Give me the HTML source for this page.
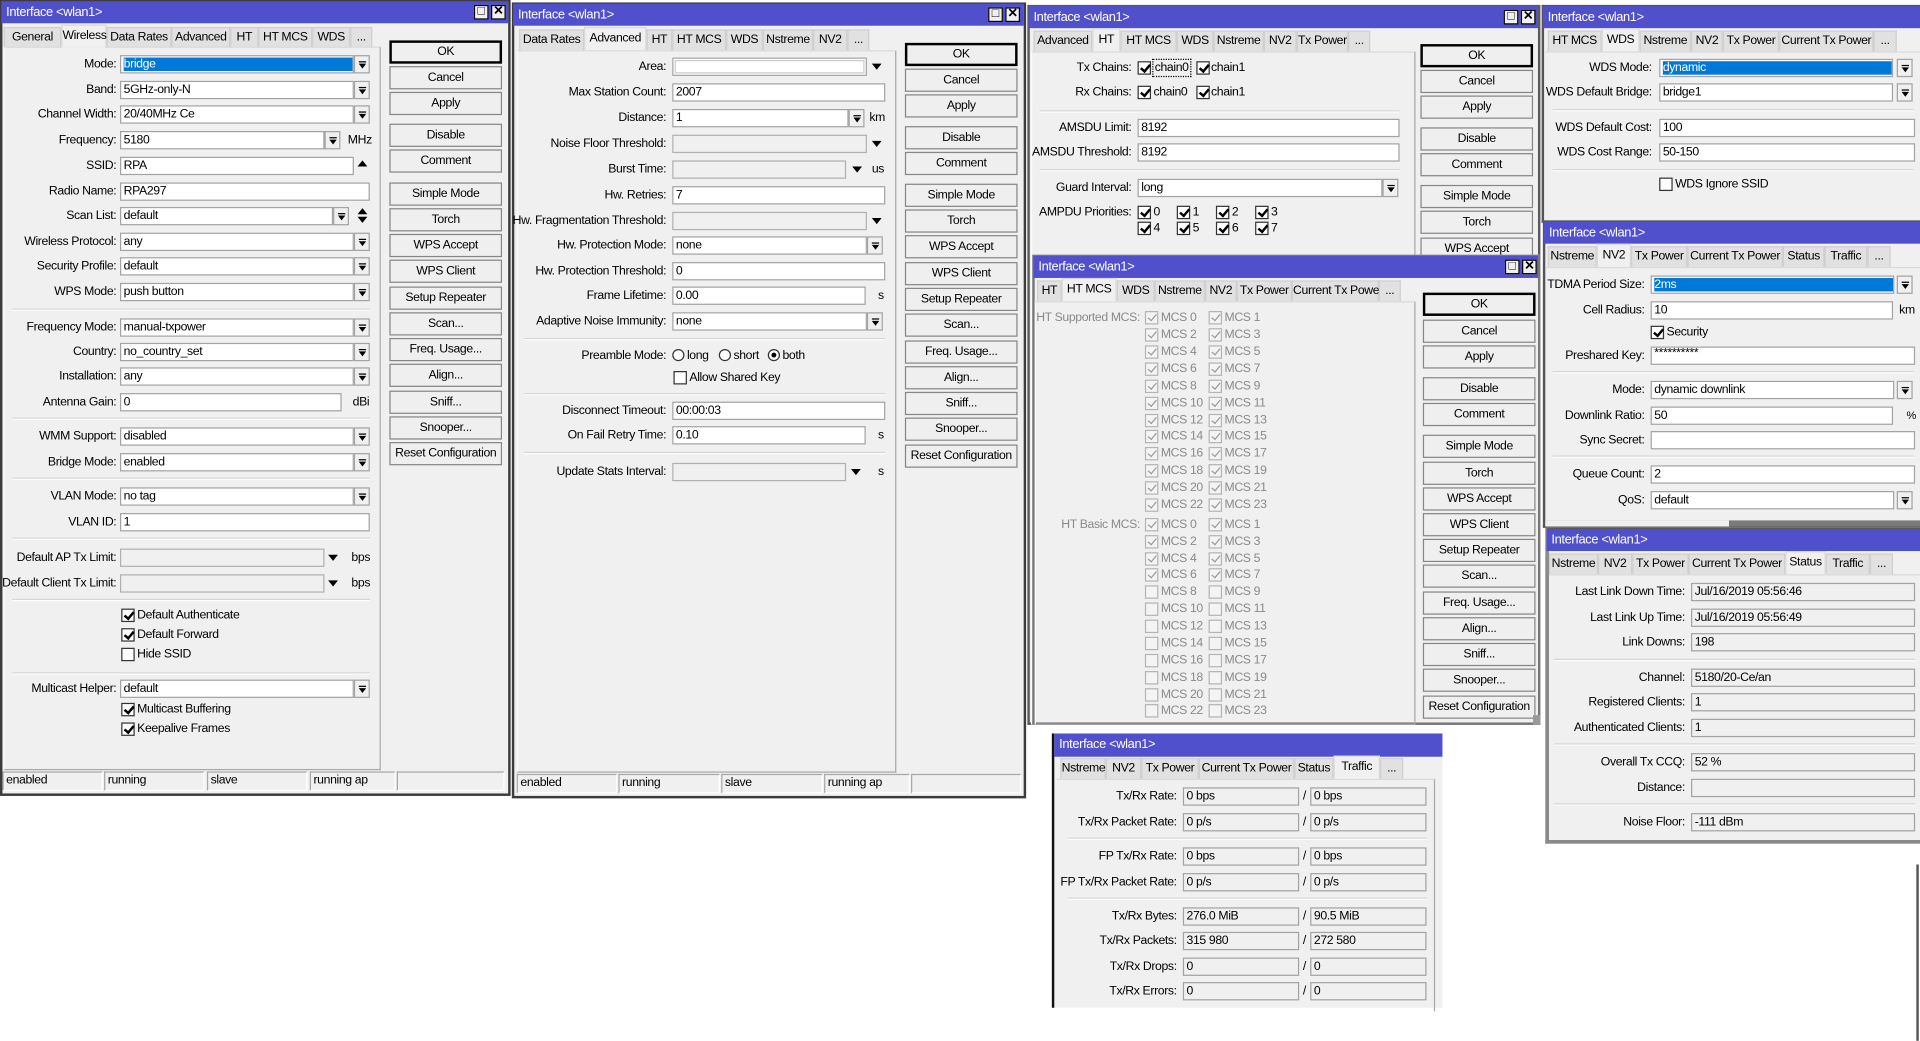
<!DOCTYPE html>
<html><head><meta charset="utf-8"><style>
html,body{margin:0;padding:0;background:#fff;width:1920px;height:1040px;overflow:hidden}
#s{position:absolute;left:0;top:0;width:1568px;height:850px;transform:scale(1.22449);transform-origin:0 0;font:10px "Liberation Sans",sans-serif;letter-spacing:-0.3px;color:#000}
#s div{position:absolute;white-space:nowrap;box-sizing:border-box}
.w{background:#f0f0f0;border:1px solid #646464}
.t{background:#5050cc;color:#fff;height:18px;line-height:18px;padding-left:4px;font-size:10.5px}
.x{width:12px;height:12px;border:1px solid #000;background:#f0f0f0;font-size:10px;line-height:10px;text-align:center;font-weight:bold;color:#000;letter-spacing:0}
.tb{height:17px;background:#e1e1e1;border:1px solid #cfcfcf;border-bottom:none;text-align:center;line-height:16px}
.ta{background:#f0f0f0;height:19px;line-height:17px;border:1px solid #d8d8d8;border-bottom:none;z-index:2}
.p{border-right:1px solid #a8a8a8;border-bottom:1px solid #a8a8a8;border-top:1px solid #dadada;border-left:1px solid #fafafa}
.l{text-align:right;height:15px;line-height:15px}
.f{background:#fff;border:1px solid #a3a3a3;height:15px;line-height:13px;padding-left:2px;overflow:hidden}
.fd{background:#f0f0f0;border-color:#b0b0b0}
.fs span{background:#0078d7;color:#fff;display:block;height:11px;line-height:11px;margin-top:1px}
.d{width:13px;height:15px;border:1px solid #a3a3a3;background:#f0f0f0}
.d:before{content:"";position:absolute;left:3px;top:6px;border-left:3px solid transparent;border-right:3px solid transparent;border-top:4px solid #000}
.d:after{content:"";position:absolute;left:3px;top:4px;width:6px;height:1px;background:#000}
.v{width:0;height:0;border-left:4px solid transparent;border-right:4px solid transparent;border-top:5px solid #000}
.b{width:92px;height:19px;border:1px solid #868686;background:#efefef;text-align:center;line-height:17px}
.ok{border:2px solid #000;line-height:15px}
.c{width:11px;height:11px;border:1px solid #333;background:#fff}
.k:after{content:"";position:absolute;left:3px;top:0px;width:3px;height:6px;border:solid #000;border-width:0 2px 2px 0;transform:rotate(40deg)}
.g{border-color:#b4b4b4;background:#f4f4f4}
.g.k:after{border-color:#9a9a9a;border-width:0 1px 1px 0}
.gt{color:#8a8a8a}
.sp{height:2px;border-top:1px solid #d6d6d6;border-bottom:1px solid #fcfcfc}
.sb{height:16px;border:1px solid #a8a8a8;border-right-color:#fff;border-bottom-color:#fff;line-height:14px;padding-left:2px}
.r{width:10px;height:10px;border:1px solid #333;border-radius:50%;background:#fff}
.rk:after{content:"";position:absolute;left:2px;top:2px;width:4px;height:4px;border-radius:50%;background:#000}
.ro{background:#f0f0f0;border:1px solid #a3a3a3;height:15px;line-height:13px;padding-left:2px}
</style></head><body><div id="s">

<!-- W1 -->
<div class="w" style="left:0;top:0;width:417px;height:650px;border:2px solid #3c3c3c"></div>
<div class="t" style="left:1px;top:1px;width:414px">Interface &lt;wlan1&gt;</div>
<div class="x" style="left:387px;top:4px">□</div><div class="x" style="left:401px;top:4px">✕</div>
<div class="tb" style="left:3px;top:22px;width:47px">General</div>
<div class="tb ta" style="left:50px;top:20px;width:37px">Wireless</div>
<div class="tb" style="left:87px;top:22px;width:53px">Data Rates</div>
<div class="tb" style="left:140px;top:22px;width:48px">Advanced</div>
<div class="tb" style="left:188px;top:22px;width:23px">HT</div>
<div class="tb" style="left:211px;top:22px;width:44px">HT MCS</div>
<div class="tb" style="left:255px;top:22px;width:31px">WDS</div>
<div class="tb" style="left:286px;top:22px;width:18px">...</div>
<div class="p" style="left:3px;top:38px;width:308px;height:591px"></div>

<div class="l" style="left:0;top:45px;width:95px">Mode:</div><div class="f fs" style="left:98px;top:45px;width:191px"><span>bridge</span></div><div class="d" style="left:289px;top:45px"></div>
<div class="l" style="left:0;top:66px;width:95px">Band:</div><div class="f" style="left:98px;top:66px;width:191px">5GHz-only-N</div><div class="d" style="left:289px;top:66px"></div>
<div class="l" style="left:0;top:86px;width:95px">Channel Width:</div><div class="f" style="left:98px;top:86px;width:191px">20/40MHz Ce</div><div class="d" style="left:289px;top:86px"></div>
<div class="l" style="left:0;top:107px;width:95px">Frequency:</div><div class="f" style="left:98px;top:107px;width:167px">5180</div><div class="d" style="left:265px;top:107px"></div><div style="left:284px;top:107px;line-height:15px">MHz</div>
<div class="l" style="left:0;top:128px;width:95px">SSID:</div><div class="f" style="left:98px;top:128px;width:191px">RPA</div><div style="left:292px;top:131px;border-left:4px solid transparent;border-right:4px solid transparent;border-bottom:5px solid #000"></div>
<div class="l" style="left:0;top:149px;width:95px">Radio Name:</div><div class="f" style="left:98px;top:149px;width:204px">RPA297</div>
<div class="l" style="left:0;top:169px;width:95px">Scan List:</div><div class="f" style="left:98px;top:169px;width:174px">default</div><div class="d" style="left:272px;top:169px"></div><div style="left:292px;top:170px;border-left:4px solid transparent;border-right:4px solid transparent;border-bottom:5px solid #000"></div><div style="left:292px;top:177px;border-left:4px solid transparent;border-right:4px solid transparent;border-top:5px solid #000"></div>
<div class="l" style="left:0;top:190px;width:95px">Wireless Protocol:</div><div class="f" style="left:98px;top:190px;width:191px">any</div><div class="d" style="left:289px;top:190px"></div>
<div class="l" style="left:0;top:210px;width:95px">Security Profile:</div><div class="f" style="left:98px;top:210px;width:191px">default</div><div class="d" style="left:289px;top:210px"></div>
<div class="l" style="left:0;top:231px;width:95px">WPS Mode:</div><div class="f" style="left:98px;top:231px;width:191px">push button</div><div class="d" style="left:289px;top:231px"></div>
<div class="sp" style="left:10px;top:252px;width:292px"></div>
<div class="l" style="left:0;top:260px;width:95px">Frequency Mode:</div><div class="f" style="left:98px;top:260px;width:191px">manual-txpower</div><div class="d" style="left:289px;top:260px"></div>
<div class="l" style="left:0;top:280px;width:95px">Country:</div><div class="f" style="left:98px;top:280px;width:191px">no_country_set</div><div class="d" style="left:289px;top:280px"></div>
<div class="l" style="left:0;top:300px;width:95px">Installation:</div><div class="f" style="left:98px;top:300px;width:191px">any</div><div class="d" style="left:289px;top:300px"></div>
<div class="l" style="left:0;top:321px;width:95px">Antenna Gain:</div><div class="f" style="left:98px;top:321px;width:181px">0</div><div style="left:288px;top:321px;line-height:15px">dBi</div>
<div class="sp" style="left:10px;top:341px;width:292px"></div>
<div class="l" style="left:0;top:349px;width:95px">WMM Support:</div><div class="f" style="left:98px;top:349px;width:191px">disabled</div><div class="d" style="left:289px;top:349px"></div>
<div class="l" style="left:0;top:370px;width:95px">Bridge Mode:</div><div class="f" style="left:98px;top:370px;width:191px">enabled</div><div class="d" style="left:289px;top:370px"></div>
<div class="sp" style="left:10px;top:390px;width:292px"></div>
<div class="l" style="left:0;top:398px;width:95px">VLAN Mode:</div><div class="f" style="left:98px;top:398px;width:191px">no tag</div><div class="d" style="left:289px;top:398px"></div>
<div class="l" style="left:0;top:419px;width:95px">VLAN ID:</div><div class="f" style="left:98px;top:419px;width:204px">1</div>
<div class="sp" style="left:10px;top:439px;width:292px"></div>
<div class="l" style="left:0;top:448px;width:95px">Default AP Tx Limit:</div><div class="f fd" style="left:98px;top:448px;width:167px"></div><div class="v" style="left:268px;top:453px"></div><div style="left:287px;top:448px;line-height:15px">bps</div>
<div class="l" style="left:0;top:469px;width:95px">Default Client Tx Limit:</div><div class="f fd" style="left:98px;top:469px;width:167px"></div><div class="v" style="left:268px;top:474px"></div><div style="left:287px;top:469px;line-height:15px">bps</div>
<div class="sp" style="left:10px;top:489px;width:292px"></div>
<div class="c k" style="left:99px;top:497px"></div><div style="left:112px;top:495px;line-height:15px">Default Authenticate</div>
<div class="c k" style="left:99px;top:513px"></div><div style="left:112px;top:511px;line-height:15px">Default Forward</div>
<div class="c" style="left:99px;top:529px"></div><div style="left:112px;top:527px;line-height:15px">Hide SSID</div>
<div class="sp" style="left:10px;top:549px;width:292px"></div>
<div class="l" style="left:0;top:555px;width:95px">Multicast Helper:</div><div class="f" style="left:98px;top:555px;width:191px">default</div><div class="d" style="left:289px;top:555px"></div>
<div class="c k" style="left:99px;top:574px"></div><div style="left:112px;top:572px;line-height:15px">Multicast Buffering</div>
<div class="c k" style="left:99px;top:590px"></div><div style="left:112px;top:588px;line-height:15px">Keepalive Frames</div>

<div class="b ok" style="left:318px;top:33px">OK</div>
<div class="b" style="left:318px;top:54px">Cancel</div>
<div class="b" style="left:318px;top:75px">Apply</div>
<div class="b" style="left:318px;top:101px">Disable</div>
<div class="b" style="left:318px;top:122px">Comment</div>
<div class="b" style="left:318px;top:149px">Simple Mode</div>
<div class="b" style="left:318px;top:170px">Torch</div>
<div class="b" style="left:318px;top:191px">WPS Accept</div>
<div class="b" style="left:318px;top:212px">WPS Client</div>
<div class="b" style="left:318px;top:234px">Setup Repeater</div>
<div class="b" style="left:318px;top:255px">Scan...</div>
<div class="b" style="left:318px;top:276px">Freq. Usage...</div>
<div class="b" style="left:318px;top:297px">Align...</div>
<div class="b" style="left:318px;top:319px">Sniff...</div>
<div class="b" style="left:318px;top:340px">Snooper...</div>
<div class="b" style="left:318px;top:361px">Reset Configuration</div>
<div class="sb" style="left:2px;top:630px;width:82px">enabled</div>
<div class="sb" style="left:85px;top:630px;width:82px">running</div>
<div class="sb" style="left:169px;top:630px;width:82px">slave</div>
<div class="sb" style="left:253px;top:630px;width:70px">running ap</div>
<div class="sb" style="left:324px;top:630px;width:88px"></div>

<!-- W2 -->
<div class="w" style="left:418px;top:2px;width:420px;height:650px;border:2px solid #3c3c3c"></div>
<div class="t" style="left:419px;top:3px;width:417px">Interface &lt;wlan1&gt;</div>
<div class="x" style="left:807px;top:6px">□</div><div class="x" style="left:821px;top:6px">✕</div>
<div class="tb" style="left:424px;top:24px;width:53px">Data Rates</div>
<div class="tb ta" style="left:477px;top:22px;width:51px">Advanced</div>
<div class="tb" style="left:528px;top:24px;width:21px">HT</div>
<div class="tb" style="left:549px;top:24px;width:44px">HT MCS</div>
<div class="tb" style="left:593px;top:24px;width:30px">WDS</div>
<div class="tb" style="left:623px;top:24px;width:41px">Nstreme</div>
<div class="tb" style="left:664px;top:24px;width:28px">NV2</div>
<div class="tb" style="left:692px;top:24px;width:18px">...</div>
<div class="p" style="left:422px;top:41px;width:310px;height:590px"></div>
<div class="l" style="left:380px;top:47px;width:164px">Area:</div><div class="f" style="left:549px;top:47px;width:159px;box-shadow:inset 0 0 0 1px #fff,inset 0 0 0 2px #ccc"></div><div class="v" style="left:712px;top:52px"></div>
<div class="l" style="left:380px;top:68px;width:164px">Max Station Count:</div><div class="f" style="left:549px;top:68px;width:174px">2007</div>
<div class="l" style="left:380px;top:89px;width:164px">Distance:</div><div class="f" style="left:549px;top:89px;width:144px">1</div><div class="d" style="left:693px;top:89px"></div><div style="left:710px;top:89px;line-height:15px">km</div>
<div class="l" style="left:380px;top:110px;width:164px">Noise Floor Threshold:</div><div class="f fd" style="left:549px;top:110px;width:159px"></div><div class="v" style="left:712px;top:115px"></div>
<div class="l" style="left:380px;top:131px;width:164px">Burst Time:</div><div class="f fd" style="left:549px;top:131px;width:142px"></div><div class="v" style="left:696px;top:136px"></div><div style="left:712px;top:131px;line-height:15px">us</div>
<div class="l" style="left:380px;top:152px;width:164px">Hw. Retries:</div><div class="f" style="left:549px;top:152px;width:174px">7</div>
<div class="l" style="left:380px;top:173px;width:164px">Hw. Fragmentation Threshold:</div><div class="f fd" style="left:549px;top:173px;width:159px"></div><div class="v" style="left:712px;top:178px"></div>
<div class="l" style="left:380px;top:193px;width:164px">Hw. Protection Mode:</div><div class="f" style="left:549px;top:193px;width:159px">none</div><div class="d" style="left:708px;top:193px"></div>
<div class="l" style="left:380px;top:214px;width:164px">Hw. Protection Threshold:</div><div class="f" style="left:549px;top:214px;width:174px">0</div>
<div class="l" style="left:380px;top:234px;width:164px">Frame Lifetime:</div><div class="f" style="left:549px;top:234px;width:158px">0.00</div><div style="left:717px;top:234px;line-height:15px">s</div>
<div class="l" style="left:380px;top:255px;width:164px">Adaptive Noise Immunity:</div><div class="f" style="left:549px;top:255px;width:159px">none</div><div class="d" style="left:708px;top:255px"></div>
<div class="sp" style="left:428px;top:276px;width:295px"></div>
<div class="l" style="left:380px;top:283px;width:164px">Preamble Mode:</div>
<div class="r" style="left:549px;top:285px"></div><div style="left:561px;top:283px;line-height:15px">long</div>
<div class="r" style="left:587px;top:285px"></div><div style="left:599px;top:283px;line-height:15px">short</div>
<div class="r rk" style="left:627px;top:285px"></div><div style="left:639px;top:283px;line-height:15px">both</div>
<div class="c" style="left:550px;top:303px"></div><div style="left:563px;top:301px;line-height:15px">Allow Shared Key</div>
<div class="sp" style="left:428px;top:321px;width:295px"></div>
<div class="l" style="left:380px;top:328px;width:164px">Disconnect Timeout:</div><div class="f" style="left:549px;top:328px;width:174px">00:00:03</div>
<div class="l" style="left:380px;top:348px;width:164px">On Fail Retry Time:</div><div class="f" style="left:549px;top:348px;width:158px">0.10</div><div style="left:717px;top:348px;line-height:15px">s</div>
<div class="sp" style="left:428px;top:369px;width:295px"></div>
<div class="l" style="left:380px;top:378px;width:164px">Update Stats Interval:</div><div class="f fd" style="left:549px;top:378px;width:142px"></div><div class="v" style="left:695px;top:383px"></div><div style="left:717px;top:378px;line-height:15px">s</div>
<div class="b ok" style="left:739px;top:35px">OK</div>
<div class="b" style="left:739px;top:56px">Cancel</div>
<div class="b" style="left:739px;top:77px">Apply</div>
<div class="b" style="left:739px;top:103px">Disable</div>
<div class="b" style="left:739px;top:124px">Comment</div>
<div class="b" style="left:739px;top:150px">Simple Mode</div>
<div class="b" style="left:739px;top:171px">Torch</div>
<div class="b" style="left:739px;top:192px">WPS Accept</div>
<div class="b" style="left:739px;top:214px">WPS Client</div>
<div class="b" style="left:739px;top:235px">Setup Repeater</div>
<div class="b" style="left:739px;top:256px">Scan...</div>
<div class="b" style="left:739px;top:278px">Freq. Usage...</div>
<div class="b" style="left:739px;top:299px">Align...</div>
<div class="b" style="left:739px;top:320px">Sniff...</div>
<div class="b" style="left:739px;top:341px">Snooper...</div>
<div class="b" style="left:739px;top:363px">Reset Configuration</div>
<div class="sb" style="left:422px;top:632px;width:82px">enabled</div>
<div class="sb" style="left:505px;top:632px;width:83px">running</div>
<div class="sb" style="left:589px;top:632px;width:83px">slave</div>
<div class="sb" style="left:673px;top:632px;width:70px">running ap</div>
<div class="sb" style="left:744px;top:632px;width:90px"></div>

<!-- W3 -->
<div class="w" style="left:839px;top:4px;width:419px;height:588px;border:2px solid #5a5a5a"></div>
<div class="t" style="left:840px;top:5px;width:416px">Interface &lt;wlan1&gt;</div>
<div class="x" style="left:1228px;top:8px">□</div><div class="x" style="left:1242px;top:8px">✕</div>
<div class="tb" style="left:844px;top:25px;width:48px">Advanced</div>
<div class="tb ta" style="left:892px;top:23px;width:23px">HT</div>
<div class="tb" style="left:915px;top:25px;width:46px">HT MCS</div>
<div class="tb" style="left:961px;top:25px;width:30px">WDS</div>
<div class="tb" style="left:991px;top:25px;width:41px">Nstreme</div>
<div class="tb" style="left:1032px;top:25px;width:27px">NV2</div>
<div class="tb" style="left:1059px;top:25px;width:42px">Tx Power</div>
<div class="tb" style="left:1101px;top:25px;width:18px">...</div>
<div class="p" style="left:842px;top:42px;width:314px;height:550px"></div>
<div class="l" style="left:800px;top:48px;width:124px">Tx Chains:</div>
<div class="c k" style="left:929px;top:50px"></div><div style="left:941px;top:48px;line-height:13px;border:1px dotted #000;padding:0 1px">chain0</div>
<div class="c k" style="left:977px;top:50px"></div><div style="left:989px;top:48px;line-height:15px">chain1</div>
<div class="l" style="left:800px;top:68px;width:124px">Rx Chains:</div>
<div class="c k" style="left:929px;top:70px"></div><div style="left:942px;top:68px;line-height:15px">chain0</div>
<div class="c k" style="left:977px;top:70px"></div><div style="left:989px;top:68px;line-height:15px">chain1</div>
<div class="sp" style="left:849px;top:90px;width:294px"></div>
<div class="l" style="left:800px;top:97px;width:124px">AMSDU Limit:</div><div class="f" style="left:929px;top:97px;width:214px">8192</div>
<div class="l" style="left:800px;top:117px;width:124px">AMSDU Threshold:</div><div class="f" style="left:929px;top:117px;width:214px">8192</div>
<div class="sp" style="left:849px;top:138px;width:294px"></div>
<div class="l" style="left:800px;top:146px;width:124px">Guard Interval:</div><div class="f" style="left:929px;top:146px;width:200px">long</div><div class="d" style="left:1129px;top:146px"></div>
<div class="l" style="left:800px;top:166px;width:124px">AMPDU Priorities:</div>
<div class="c k" style="left:929px;top:168px"></div><div style="left:942px;top:166px;line-height:15px">0</div>
<div class="c k" style="left:961px;top:168px"></div><div style="left:974px;top:166px;line-height:15px">1</div>
<div class="c k" style="left:993px;top:168px"></div><div style="left:1006px;top:166px;line-height:15px">2</div>
<div class="c k" style="left:1025px;top:168px"></div><div style="left:1038px;top:166px;line-height:15px">3</div>
<div class="c k" style="left:929px;top:181px"></div><div style="left:942px;top:179px;line-height:15px">4</div>
<div class="c k" style="left:961px;top:181px"></div><div style="left:974px;top:179px;line-height:15px">5</div>
<div class="c k" style="left:993px;top:181px"></div><div style="left:1006px;top:179px;line-height:15px">6</div>
<div class="c k" style="left:1025px;top:181px"></div><div style="left:1038px;top:179px;line-height:15px">7</div>
<div class="b ok" style="left:1160px;top:36px">OK</div>
<div class="b" style="left:1160px;top:57px">Cancel</div>
<div class="b" style="left:1160px;top:78px">Apply</div>
<div class="b" style="left:1160px;top:104px">Disable</div>
<div class="b" style="left:1160px;top:125px">Comment</div>
<div class="b" style="left:1160px;top:151px">Simple Mode</div>
<div class="b" style="left:1160px;top:172px">Torch</div>
<div class="b" style="left:1160px;top:194px">WPS Accept</div>

<!-- W4 -->
<div class="w" style="left:843px;top:208px;width:415px;height:384px;border:2px solid #777"></div>
<div class="t" style="left:844px;top:209px;width:412px;height:18px">Interface &lt;wlan1&gt;</div>
<div class="x" style="left:1229px;top:212px">□</div><div class="x" style="left:1243px;top:212px">✕</div>
<div class="tb" style="left:847px;top:229px;width:20px">HT</div>
<div class="tb ta" style="left:867px;top:227px;width:45px">HT MCS</div>
<div class="tb" style="left:912px;top:229px;width:31px">WDS</div>
<div class="tb" style="left:943px;top:229px;width:41px">Nstreme</div>
<div class="tb" style="left:984px;top:229px;width:26px">NV2</div>
<div class="tb" style="left:1010px;top:229px;width:45px">Tx Power</div>
<div class="tb" style="left:1055px;top:229px;width:71px">Current Tx Power</div>
<div class="tb" style="left:1126px;top:229px;width:18px">...</div>
<div class="p" style="left:845px;top:246px;width:311px;height:346px"></div>
<div class="l gt" style="left:830px;top:252px;width:101px">HT Supported MCS:</div>
<div class="l gt" style="left:830px;top:421px;width:101px">HT Basic MCS:</div>

<div class="c g k" style="left:935px;top:254px"></div><div class="gt" style="left:948px;top:252px;line-height:15px">MCS 0</div><div class="c g k" style="left:987px;top:254px"></div><div class="gt" style="left:1000px;top:252px;line-height:15px">MCS 1</div>
<div class="c g k" style="left:935px;top:268px"></div><div class="gt" style="left:948px;top:266px;line-height:15px">MCS 2</div><div class="c g k" style="left:987px;top:268px"></div><div class="gt" style="left:1000px;top:266px;line-height:15px">MCS 3</div>
<div class="c g k" style="left:935px;top:282px"></div><div class="gt" style="left:948px;top:280px;line-height:15px">MCS 4</div><div class="c g k" style="left:987px;top:282px"></div><div class="gt" style="left:1000px;top:280px;line-height:15px">MCS 5</div>
<div class="c g k" style="left:935px;top:296px"></div><div class="gt" style="left:948px;top:294px;line-height:15px">MCS 6</div><div class="c g k" style="left:987px;top:296px"></div><div class="gt" style="left:1000px;top:294px;line-height:15px">MCS 7</div>
<div class="c g k" style="left:935px;top:310px"></div><div class="gt" style="left:948px;top:308px;line-height:15px">MCS 8</div><div class="c g k" style="left:987px;top:310px"></div><div class="gt" style="left:1000px;top:308px;line-height:15px">MCS 9</div>
<div class="c g k" style="left:935px;top:324px"></div><div class="gt" style="left:948px;top:322px;line-height:15px">MCS 10</div><div class="c g k" style="left:987px;top:324px"></div><div class="gt" style="left:1000px;top:322px;line-height:15px">MCS 11</div>
<div class="c g k" style="left:935px;top:338px"></div><div class="gt" style="left:948px;top:336px;line-height:15px">MCS 12</div><div class="c g k" style="left:987px;top:338px"></div><div class="gt" style="left:1000px;top:336px;line-height:15px">MCS 13</div>
<div class="c g k" style="left:935px;top:351px"></div><div class="gt" style="left:948px;top:349px;line-height:15px">MCS 14</div><div class="c g k" style="left:987px;top:351px"></div><div class="gt" style="left:1000px;top:349px;line-height:15px">MCS 15</div>
<div class="c g k" style="left:935px;top:365px"></div><div class="gt" style="left:948px;top:363px;line-height:15px">MCS 16</div><div class="c g k" style="left:987px;top:365px"></div><div class="gt" style="left:1000px;top:363px;line-height:15px">MCS 17</div>
<div class="c g k" style="left:935px;top:379px"></div><div class="gt" style="left:948px;top:377px;line-height:15px">MCS 18</div><div class="c g k" style="left:987px;top:379px"></div><div class="gt" style="left:1000px;top:377px;line-height:15px">MCS 19</div>
<div class="c g k" style="left:935px;top:393px"></div><div class="gt" style="left:948px;top:391px;line-height:15px">MCS 20</div><div class="c g k" style="left:987px;top:393px"></div><div class="gt" style="left:1000px;top:391px;line-height:15px">MCS 21</div>
<div class="c g k" style="left:935px;top:407px"></div><div class="gt" style="left:948px;top:405px;line-height:15px">MCS 22</div><div class="c g k" style="left:987px;top:407px"></div><div class="gt" style="left:1000px;top:405px;line-height:15px">MCS 23</div>

<div class="c g k" style="left:935px;top:423px"></div><div class="gt" style="left:948px;top:421px;line-height:15px">MCS 0</div><div class="c g k" style="left:987px;top:423px"></div><div class="gt" style="left:1000px;top:421px;line-height:15px">MCS 1</div>
<div class="c g k" style="left:935px;top:437px"></div><div class="gt" style="left:948px;top:435px;line-height:15px">MCS 2</div><div class="c g k" style="left:987px;top:437px"></div><div class="gt" style="left:1000px;top:435px;line-height:15px">MCS 3</div>
<div class="c g k" style="left:935px;top:451px"></div><div class="gt" style="left:948px;top:449px;line-height:15px">MCS 4</div><div class="c g k" style="left:987px;top:451px"></div><div class="gt" style="left:1000px;top:449px;line-height:15px">MCS 5</div>
<div class="c g k" style="left:935px;top:464px"></div><div class="gt" style="left:948px;top:462px;line-height:15px">MCS 6</div><div class="c g k" style="left:987px;top:464px"></div><div class="gt" style="left:1000px;top:462px;line-height:15px">MCS 7</div>
<div class="c g" style="left:935px;top:478px"></div><div class="gt" style="left:948px;top:476px;line-height:15px">MCS 8</div><div class="c g" style="left:987px;top:478px"></div><div class="gt" style="left:1000px;top:476px;line-height:15px">MCS 9</div>
<div class="c g" style="left:935px;top:492px"></div><div class="gt" style="left:948px;top:490px;line-height:15px">MCS 10</div><div class="c g" style="left:987px;top:492px"></div><div class="gt" style="left:1000px;top:490px;line-height:15px">MCS 11</div>
<div class="c g" style="left:935px;top:506px"></div><div class="gt" style="left:948px;top:504px;line-height:15px">MCS 12</div><div class="c g" style="left:987px;top:506px"></div><div class="gt" style="left:1000px;top:504px;line-height:15px">MCS 13</div>
<div class="c g" style="left:935px;top:520px"></div><div class="gt" style="left:948px;top:518px;line-height:15px">MCS 14</div><div class="c g" style="left:987px;top:520px"></div><div class="gt" style="left:1000px;top:518px;line-height:15px">MCS 15</div>
<div class="c g" style="left:935px;top:534px"></div><div class="gt" style="left:948px;top:532px;line-height:15px">MCS 16</div><div class="c g" style="left:987px;top:534px"></div><div class="gt" style="left:1000px;top:532px;line-height:15px">MCS 17</div>
<div class="c g" style="left:935px;top:548px"></div><div class="gt" style="left:948px;top:546px;line-height:15px">MCS 18</div><div class="c g" style="left:987px;top:548px"></div><div class="gt" style="left:1000px;top:546px;line-height:15px">MCS 19</div>
<div class="c g" style="left:935px;top:562px"></div><div class="gt" style="left:948px;top:560px;line-height:15px">MCS 20</div><div class="c g" style="left:987px;top:562px"></div><div class="gt" style="left:1000px;top:560px;line-height:15px">MCS 21</div>
<div class="c g" style="left:935px;top:575px"></div><div class="gt" style="left:948px;top:573px;line-height:15px">MCS 22</div><div class="c g" style="left:987px;top:575px"></div><div class="gt" style="left:1000px;top:573px;line-height:15px">MCS 23</div>

<div class="b ok" style="left:1162px;top:239px">OK</div>
<div class="b" style="left:1162px;top:261px">Cancel</div>
<div class="b" style="left:1162px;top:282px">Apply</div>
<div class="b" style="left:1162px;top:308px">Disable</div>
<div class="b" style="left:1162px;top:329px">Comment</div>
<div class="b" style="left:1162px;top:355px">Simple Mode</div>
<div class="b" style="left:1162px;top:377px">Torch</div>
<div class="b" style="left:1162px;top:398px">WPS Accept</div>
<div class="b" style="left:1162px;top:419px">WPS Client</div>
<div class="b" style="left:1162px;top:440px">Setup Repeater</div>
<div class="b" style="left:1162px;top:461px">Scan...</div>
<div class="b" style="left:1162px;top:483px">Freq. Usage...</div>
<div class="b" style="left:1162px;top:504px">Align...</div>
<div class="b" style="left:1162px;top:525px">Sniff...</div>
<div class="b" style="left:1162px;top:546px">Snooper...</div>
<div class="b" style="left:1162px;top:568px">Reset Configuration</div>
<div style="left:1252px;top:584px;width:6px;height:8px;background:#999"></div>

<!-- W5 traffic -->
<div class="w" style="left:859px;top:599px;width:319px;height:224px;border:none;border-left:2px solid #111"></div>
<div class="t" style="left:861px;top:599px;width:317px;height:19px;line-height:19px">Interface &lt;wlan1&gt;</div>
<div class="tb" style="left:866px;top:619px;width:37px">Nstreme</div>
<div class="tb" style="left:903px;top:619px;width:29px">NV2</div>
<div class="tb" style="left:932px;top:619px;width:47px">Tx Power</div>
<div class="tb" style="left:979px;top:619px;width:78px">Current Tx Power</div>
<div class="tb" style="left:1057px;top:619px;width:32px">Status</div>
<div class="tb ta" style="left:1089px;top:617px;width:38px">Traffic</div>
<div class="tb" style="left:1127px;top:619px;width:19px">...</div>
<div style="left:863px;top:636px;width:309px;height:190px;border-right:1px solid #a8a8a8;border-top:1px solid #dadada"></div>
<div class="l" style="left:860px;top:643px;width:101px">Tx/Rx Rate:</div><div class="ro" style="left:966px;top:643px;width:95px">0 bps</div><div style="left:1064px;top:643px;line-height:15px">/</div><div class="ro" style="left:1070px;top:643px;width:95px">0 bps</div>
<div class="l" style="left:860px;top:664px;width:101px">Tx/Rx Packet Rate:</div><div class="ro" style="left:966px;top:664px;width:95px">0 p/s</div><div style="left:1064px;top:664px;line-height:15px">/</div><div class="ro" style="left:1070px;top:664px;width:95px">0 p/s</div>
<div class="sp" style="left:872px;top:684px;width:293px"></div>
<div class="l" style="left:860px;top:692px;width:101px">FP Tx/Rx Rate:</div><div class="ro" style="left:966px;top:692px;width:95px">0 bps</div><div style="left:1064px;top:692px;line-height:15px">/</div><div class="ro" style="left:1070px;top:692px;width:95px">0 bps</div>
<div class="l" style="left:860px;top:713px;width:101px">FP Tx/Rx Packet Rate:</div><div class="ro" style="left:966px;top:713px;width:95px">0 p/s</div><div style="left:1064px;top:713px;line-height:15px">/</div><div class="ro" style="left:1070px;top:713px;width:95px">0 p/s</div>
<div class="sp" style="left:872px;top:733px;width:293px"></div>
<div class="l" style="left:860px;top:741px;width:101px">Tx/Rx Bytes:</div><div class="ro" style="left:966px;top:741px;width:95px">276.0 MiB</div><div style="left:1064px;top:741px;line-height:15px">/</div><div class="ro" style="left:1070px;top:741px;width:95px">90.5 MiB</div>
<div class="l" style="left:860px;top:761px;width:101px">Tx/Rx Packets:</div><div class="ro" style="left:966px;top:761px;width:95px">315 980</div><div style="left:1064px;top:761px;line-height:15px">/</div><div class="ro" style="left:1070px;top:761px;width:95px">272 580</div>
<div class="l" style="left:860px;top:782px;width:101px">Tx/Rx Drops:</div><div class="ro" style="left:966px;top:782px;width:95px">0</div><div style="left:1064px;top:782px;line-height:15px">/</div><div class="ro" style="left:1070px;top:782px;width:95px">0</div>
<div class="l" style="left:860px;top:802px;width:101px">Tx/Rx Errors:</div><div class="ro" style="left:966px;top:802px;width:95px">0</div><div style="left:1064px;top:802px;line-height:15px">/</div><div class="ro" style="left:1070px;top:802px;width:95px">0</div>

<!-- W6 WDS -->
<div class="w" style="left:1259px;top:4px;width:309px;height:178px;border:2px solid #555;border-right:none"></div>
<div class="t" style="left:1260px;top:5px;width:308px;height:18px">Interface &lt;wlan1&gt;</div>
<div class="tb" style="left:1264px;top:25px;width:44px">HT MCS</div>
<div class="tb ta" style="left:1308px;top:23px;width:31px">WDS</div>
<div class="tb" style="left:1339px;top:25px;width:42px">Nstreme</div>
<div class="tb" style="left:1381px;top:25px;width:26px">NV2</div>
<div class="tb" style="left:1407px;top:25px;width:46px">Tx Power</div>
<div class="tb" style="left:1453px;top:25px;width:77px">Current Tx Power</div>
<div class="tb" style="left:1530px;top:25px;width:19px">...</div>
<div style="left:1262px;top:42px;width:306px;height:1px;background:#dadada"></div>
<div class="l" style="left:1250px;top:48px;width:99px">WDS Mode:</div><div class="f fs" style="left:1355px;top:48px;width:191px"><span>dynamic</span></div><div class="d" style="left:1549px;top:48px"></div>
<div class="l" style="left:1250px;top:68px;width:99px">WDS Default Bridge:</div><div class="f" style="left:1355px;top:68px;width:191px">bridge1</div><div class="d" style="left:1549px;top:68px"></div>
<div class="sp" style="left:1268px;top:89px;width:295px"></div>
<div class="l" style="left:1250px;top:97px;width:99px">WDS Default Cost:</div><div class="f" style="left:1355px;top:97px;width:209px">100</div>
<div class="l" style="left:1250px;top:117px;width:99px">WDS Cost Range:</div><div class="f" style="left:1355px;top:117px;width:209px">50-150</div>
<div class="sp" style="left:1268px;top:138px;width:295px"></div>
<div class="c" style="left:1355px;top:145px"></div><div style="left:1368px;top:143px;line-height:15px">WDS Ignore SSID</div>

<!-- W7 NV2 -->
<div class="w" style="left:1260px;top:180px;width:308px;height:251px;border:2px solid #555;border-right:none"></div>
<div class="t" style="left:1261px;top:181px;width:307px;height:18px">Interface &lt;wlan1&gt;</div>
<div class="tb" style="left:1264px;top:201px;width:40px">Nstreme</div>
<div class="tb ta" style="left:1304px;top:199px;width:28px">NV2</div>
<div class="tb" style="left:1332px;top:201px;width:46px">Tx Power</div>
<div class="tb" style="left:1378px;top:201px;width:78px">Current Tx Power</div>
<div class="tb" style="left:1456px;top:201px;width:34px">Status</div>
<div class="tb" style="left:1490px;top:201px;width:35px">Traffic</div>
<div class="tb" style="left:1525px;top:201px;width:19px">...</div>
<div style="left:1262px;top:218px;width:306px;height:1px;background:#dadada"></div>
<div class="l" style="left:1250px;top:225px;width:93px">TDMA Period Size:</div><div class="f fs" style="left:1348px;top:225px;width:199px"><span>2ms</span></div><div class="d" style="left:1549px;top:225px"></div>
<div class="l" style="left:1250px;top:246px;width:93px">Cell Radius:</div><div class="f" style="left:1348px;top:246px;width:198px">10</div><div style="left:1551px;top:246px;line-height:15px">km</div>
<div class="c k" style="left:1348px;top:266px"></div><div style="left:1361px;top:264px;line-height:15px">Security</div>
<div class="l" style="left:1250px;top:283px;width:93px">Preshared Key:</div><div class="f" style="left:1348px;top:283px;width:216px;line-height:9px">**********</div>
<div class="sp" style="left:1268px;top:303px;width:295px"></div>
<div class="l" style="left:1250px;top:311px;width:93px">Mode:</div><div class="f" style="left:1348px;top:311px;width:199px">dynamic downlink</div><div class="d" style="left:1549px;top:311px"></div>
<div class="l" style="left:1250px;top:332px;width:93px">Downlink Ratio:</div><div class="f" style="left:1348px;top:332px;width:198px">50</div><div style="left:1557px;top:332px;line-height:15px;font-size:9px">%</div>
<div class="l" style="left:1250px;top:352px;width:93px">Sync Secret:</div><div class="f" style="left:1348px;top:352px;width:216px"></div>
<div class="sp" style="left:1268px;top:372px;width:295px"></div>
<div class="l" style="left:1250px;top:380px;width:93px">Queue Count:</div><div class="f" style="left:1348px;top:380px;width:216px">2</div>
<div class="l" style="left:1250px;top:401px;width:93px">QoS:</div><div class="f" style="left:1348px;top:401px;width:199px">default</div><div class="d" style="left:1549px;top:401px"></div>
<div style="left:1262px;top:425px;width:306px;height:5px;background:#7a7a7a"></div>
<div style="left:1262px;top:425px;width:150px;height:5px;background:#f0f0f0"></div>

<!-- W8 status -->
<div class="w" style="left:1262px;top:431px;width:306px;height:258px;border:3px solid #8a8a8a;border-right:none;border-top:1px solid #555"></div>
<div class="t" style="left:1263px;top:432px;width:305px;height:18px">Interface &lt;wlan1&gt;</div>
<div class="tb" style="left:1265px;top:452px;width:40px">Nstreme</div>
<div class="tb" style="left:1305px;top:452px;width:28px">NV2</div>
<div class="tb" style="left:1333px;top:452px;width:46px">Tx Power</div>
<div class="tb" style="left:1379px;top:452px;width:79px">Current Tx Power</div>
<div class="tb ta" style="left:1458px;top:450px;width:33px">Status</div>
<div class="tb" style="left:1491px;top:452px;width:36px">Traffic</div>
<div class="tb" style="left:1527px;top:452px;width:19px">...</div>
<div style="left:1265px;top:469px;width:303px;height:1px;background:#dadada"></div>
<div class="l" style="left:1250px;top:476px;width:126px">Last Link Down Time:</div><div class="ro" style="left:1381px;top:476px;width:183px">Jul/16/2019 05:56:46</div>
<div class="l" style="left:1250px;top:497px;width:126px">Last Link Up Time:</div><div class="ro" style="left:1381px;top:497px;width:183px">Jul/16/2019 05:56:49</div>
<div class="l" style="left:1250px;top:517px;width:126px">Link Downs:</div><div class="ro" style="left:1381px;top:517px;width:183px">198</div>
<div class="sp" style="left:1269px;top:538px;width:295px"></div>
<div class="l" style="left:1250px;top:546px;width:126px">Channel:</div><div class="ro" style="left:1381px;top:546px;width:183px">5180/20-Ce/an</div>
<div class="l" style="left:1250px;top:566px;width:126px">Registered Clients:</div><div class="ro" style="left:1381px;top:566px;width:183px">1</div>
<div class="l" style="left:1250px;top:587px;width:126px">Authenticated Clients:</div><div class="ro" style="left:1381px;top:587px;width:183px">1</div>
<div class="sp" style="left:1269px;top:607px;width:295px"></div>
<div class="l" style="left:1250px;top:615px;width:126px">Overall Tx CCQ:</div><div class="ro" style="left:1381px;top:615px;width:183px">52 %</div>
<div class="l" style="left:1250px;top:636px;width:126px">Distance:</div><div class="ro" style="left:1381px;top:636px;width:183px"></div>
<div class="sp" style="left:1269px;top:656px;width:295px"></div>
<div class="l" style="left:1250px;top:664px;width:126px">Noise Floor:</div><div class="ro" style="left:1381px;top:664px;width:183px">-111 dBm</div>
<div style="left:1565px;top:706px;width:2px;height:144px;background:#555"></div>
</div></body></html>
